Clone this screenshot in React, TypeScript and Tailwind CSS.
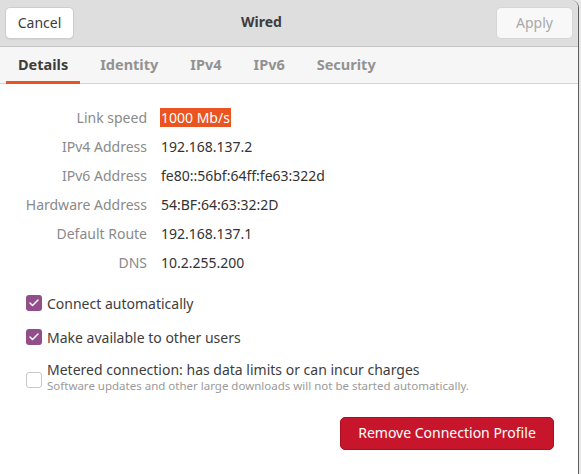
import { Check } from "lucide-react"

const rows: [string, string][] = [
  ["Link speed", "1000 Mb/s"],
  ["IPv4 Address", "192.168.137.2"],
  ["IPv6 Address", "fe80::56bf:64ff:fe63:322d"],
  ["Hardware Address", "54:BF:64:63:32:2D"],
  ["Default Route", "192.168.137.1"],
  ["DNS", "10.2.255.200"],
]

const tabs = ["Details", "Identity", "IPv4", "IPv6", "Security"]

const CheckBox = ({ checked }: { checked: boolean }) =>
  checked ? (
    <div className="w-[16px] h-[16px] rounded-[3px] bg-[#924d8b] flex items-center justify-center shrink-0">
      <Check className="w-[12px] h-[12px] text-white" strokeWidth={3} />
    </div>
  ) : (
    <div className="w-[16px] h-[16px] rounded-[3px] border border-[#c8c8c8] bg-white shrink-0" />
  )

export default function App() {
  return (
    <div
      className="w-[581px] h-[474px] bg-[#e8e8e8] overflow-hidden"
      style={{ fontFamily: '"Noto Sans", "Open Sans", sans-serif' }}
    >
      <div className="w-[579px] h-[474px] bg-white border-r border-[#5e5e5e] rounded-tr-[8px] overflow-hidden flex flex-col">
        {/* Barra de cabecera */}
        <div className="h-[47px] shrink-0 bg-[#dedede] border-b border-[#c4c4c4] flex items-center px-[5px] relative">
          <button className="h-[32px] w-[69px] rounded-[5px] bg-white border border-[#cdcdcd] text-[14px] text-[#3d3d3d] leading-[18px] pb-[1px] shadow-[0_1px_1px_rgba(0,0,0,0.05)]">
            Cancel
          </button>
          <div className="absolute left-[241px] top-[13px] text-[14px] font-bold text-[#3d3d3d] leading-[18px]">
            Wired
          </div>
          <button className="ml-auto h-[32px] w-[77px] rounded-[5px] bg-[#f8f8f8] border border-[#d6d6d6] text-[14px] text-[#a9a9a9] leading-[18px] pb-[1px]">
            Apply
          </button>
        </div>

        {/* Pestañas */}
        <div className="h-[37px] shrink-0 bg-[#f6f6f6] border-b border-[#d5d5d5] flex items-stretch pl-[6px] gap-[8px]">
          {tabs.map((t, i) => (
            <div
              key={t}
              className={`px-[12px] flex items-center text-[14.5px] font-bold relative ${
                i === 0 ? "text-[#3d3d3d]" : "text-[#929292]"
              }`}
            >
              <span>{t}</span>
              {i === 0 && (
                <div className="absolute left-0 right-0 bottom-[-1px] h-[3px] bg-[#e95420]" />
              )}
            </div>
          ))}
        </div>

        {/* Detalles */}
        <div className="pt-[19px] grid grid-cols-[147px_1fr] gap-x-[13px] text-[14px] leading-[19px]">
          {rows.map(([k, v], i) => (
            <div key={k} className="contents">
              <div className="text-right text-[#8a8a8a] h-[29px] flex items-center justify-end">{k}</div>
              <div className="h-[29px] flex items-center">
                {i === 0 ? (
                  <span className="bg-[#e95420] text-white px-[1px]">{v}</span>
                ) : (
                  <span className="text-[#333333] pl-[1px]">{v}</span>
                )}
              </div>
            </div>
          ))}
        </div>

        <div className="mt-[16px] pl-[26px] flex flex-col text-[14px] text-[#3d3d3d]">
          <div className="h-[20px] flex items-center gap-[5px]">
            <CheckBox checked />
            <span>Connect automatically</span>
          </div>
          <div className="mt-[14px] h-[20px] flex items-center gap-[5px]">
            <CheckBox checked />
            <span>Make available to other users</span>
          </div>
          <div className="mt-[13px] flex items-start gap-[5px]">
            <div className="pt-[12px]">
              <CheckBox checked={false} />
            </div>
            <div className="flex flex-col">
              <span className="leading-[19px]">Metered connection: has data limits or can incur charges</span>
              <span className="text-[11.5px] leading-[13px] text-[#9a9a9a]">
                Software updates and other large downloads will not be started automatically.
              </span>
            </div>
          </div>
        </div>

        <div className="mt-[25px] flex justify-end pr-[24px]">
          <button className="h-[33px] w-[214px] rounded-[5px] bg-[#c7162b] border border-[#a8101f] text-white text-[14px] leading-[18px] pb-[1px]">
            Remove Connection Profile
          </button>
        </div>
      </div>
    </div>
  )
}
